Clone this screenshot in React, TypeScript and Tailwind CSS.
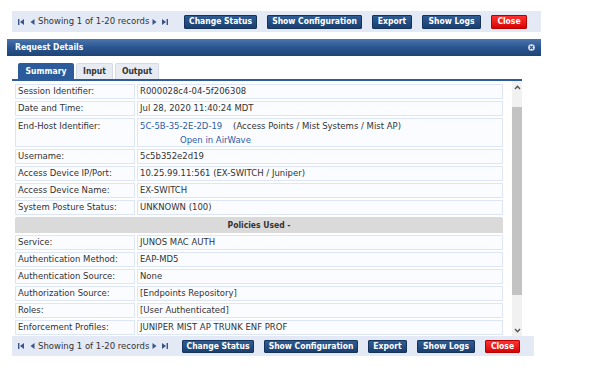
import React from "react";

const COND = "'DejaVu Sans Condensed', 'DejaVu Sans', sans-serif";

function FirstIcon() {
  return (
    <svg width="7" height="6" viewBox="0 0 7 6" className="block">
      <rect x="0" y="0" width="1.4" height="6" fill="#3a5588" />
      <polygon points="6,0 6,6 2,3" fill="#3a5588" />
    </svg>
  );
}
function PrevIcon() {
  return (
    <svg width="5" height="6" viewBox="0 0 5 6" className="block">
      <polygon points="4.5,0 4.5,6 0.5,3" fill="#3a5588" />
    </svg>
  );
}
function NextIcon() {
  return (
    <svg width="5" height="6" viewBox="0 0 5 6" className="block">
      <polygon points="0.5,0 0.5,6 4.5,3" fill="#3a5588" />
    </svg>
  );
}
function LastIcon() {
  return (
    <svg width="7" height="6" viewBox="0 0 7 6" className="block">
      <polygon points="1,0 1,6 5,3" fill="#3a5588" />
      <rect x="5.6" y="0" width="1.4" height="6" fill="#3a5588" />
    </svg>
  );
}

function Btn({ label, w, red, h }: { label: string; w: number; red?: boolean; h: number }) {
  return (
    <div
      className={
        "flex items-center justify-center text-white font-bold text-[8.5px] rounded-[1px] border " +
        (red
          ? "bg-gradient-to-b from-[#ff3030] to-[#d60000] border-[#b80000]"
          : "bg-gradient-to-b from-[#2f5c94] to-[#1b3f6f] border-[#15345c]")
      }
      style={{ width: w, height: h, fontFamily: COND }}
    >
      {label}
    </div>
  );
}

function Toolbar({
  width,
  height,
  pagW,
  btnH,
  widths,
}: {
  width: number;
  height: number;
  pagW: number;
  btnH: number;
  widths: number[];
}) {
  const labels = ["Change Status", "Show Configuration", "Export", "Show Logs", "Close"];
  return (
    <div className="flex items-center bg-[#e4eaf5]" style={{ width, height }}>
      <div className="flex items-center pl-[6px] text-[8.5px] text-[#333]" style={{ width: pagW }}>
        <FirstIcon />
        <div className="w-[5px]" />
        <PrevIcon />
        <span className="ml-[3px] mr-[3px] leading-none">Showing 1 of 1-20 records</span>
        <NextIcon />
        <div className="w-[4px]" />
        <LastIcon />
      </div>
      <div className="flex items-center gap-[10px]">
        {labels.map((l, i) => (
          <Btn key={l} label={l} w={widths[i]} h={btnH} red={i === 4} />
        ))}
      </div>
    </div>
  );
}

function Cell({ children, className = "" }: { children: React.ReactNode; className?: string }) {
  return (
    <div
      className={
        "bg-[#fbfcff] border border-[#dce6f7] pl-[2px] text-[8.5px] text-[#333] leading-[13px] " + className
      }
    >
      {children}
    </div>
  );
}

export default function App() {
  const top: [string, React.ReactNode][] = [
    ["Session Identifier:", "R000028c4-04-5f206308"],
    ["Date and Time:", "Jul 28, 2020 11:40:24 MDT"],
  ];
  const mid: [string, string][] = [
    ["Username:", "5c5b352e2d19"],
    ["Access Device IP/Port:", "10.25.99.11:561 (EX-SWITCH / Juniper)"],
    ["Access Device Name:", "EX-SWITCH"],
    ["System Posture Status:", "UNKNOWN (100)"],
  ];
  const pol: [string, string][] = [
    ["Service:", "JUNOS MAC AUTH"],
    ["Authentication Method:", "EAP-MD5"],
    ["Authentication Source:", "None"],
    ["Authorization Source:", "[Endpoints Repository]"],
    ["Roles:", "[User Authenticated]"],
    ["Enforcement Profiles:", "JUNIPER MIST AP TRUNK ENF PROF"],
  ];
  const row = (l: string, v: React.ReactNode) => (
    <React.Fragment key={l}>
      <Cell className="h-[15px] flex items-center">{l}</Cell>
      <Cell className="h-[15px] flex items-center">{v}</Cell>
    </React.Fragment>
  );

  return (
    <div
      className="w-[597px] h-[372px] bg-white pt-[11px] overflow-hidden"
      style={{ fontFamily: "'DejaVu Sans', Verdana, sans-serif" }}
    >
      <div className="ml-[12px]">
        <Toolbar width={529} height={21} pagW={172} btnH={14} widths={[73, 95, 40, 59, 36]} />
      </div>

      <div className="ml-[7px] mt-[7px] w-[534px] h-[17px] flex items-center justify-between bg-gradient-to-b from-[#4a75ad] via-[#2a5590] to-[#1d4476] px-[8px] pr-[6px]">
        <span className="text-white font-bold text-[8.5px] leading-none" style={{ fontFamily: COND }}>
          Request Details
        </span>
        <svg width="7" height="7" viewBox="0 0 7 7" className="block">
          <circle cx="3.5" cy="3.5" r="3.3" fill="#e6e9ee" />
          <path d="M2 2 L5 5 M5 2 L2 5" stroke="#33507a" strokeWidth="1.1" />
        </svg>
      </div>

      <div className="ml-[12px] w-[510px]">
        <div className="flex gap-[2px] pl-[6px] mt-[7px] h-[16px] items-end">
          <div
            className="w-[56px] h-[16px] flex items-center justify-center bg-[#2b5b9b] text-white font-bold text-[8.5px] rounded-t-[2px]"
            style={{ fontFamily: COND }}
          >
            Summary
          </div>
          <div
            className="w-[37px] h-[16px] flex items-center justify-center bg-[#e8ecf2] border border-b-0 border-[#d4dbe6] text-[#333] font-bold text-[8.5px] rounded-t-[2px]"
            style={{ fontFamily: COND }}
          >
            Input
          </div>
          <div
            className="w-[44px] h-[16px] flex items-center justify-center bg-[#e8ecf2] border border-b-0 border-[#d4dbe6] text-[#333] font-bold text-[8.5px] rounded-t-[2px]"
            style={{ fontFamily: COND }}
          >
            Output
          </div>
        </div>
        <div className="h-[2px] bg-[#2d5c9c]" />

        <div className="flex h-[255px]">
          <div className="w-[491px] overflow-hidden pl-[3px] pt-[3px]">
            <div className="grid grid-cols-[120px_366px] gap-[2px] w-[488px]">
              {top.map(([l, v]) => row(l, v))}
              <Cell className="h-[29px]">
                <div className="leading-[14px]">End-Host Identifier:</div>
              </Cell>
              <Cell className="h-[29px]">
                <div className="leading-[14px] whitespace-pre">
                  <span className="text-[#2b5ca8]">5C-5B-35-2E-2D-19</span>
                  {"    (Access Points / Mist Systems / Mist AP)"}
                </div>
                <div className="leading-[14px] pl-[40px] text-[#2b5ca8]">Open in AirWave</div>
              </Cell>
              {mid.map(([l, v]) => row(l, v))}
              <div
                className="col-span-2 h-[16px] bg-[#dadada] flex items-center justify-center text-[#333] font-bold text-[8.5px] rounded-t-[2px]"
                style={{ fontFamily: COND }}
              >
                Policies Used -
              </div>
              {pol.map(([l, v]) => row(l, v))}
            </div>
          </div>
          <div className="ml-[9px] w-[10px] bg-[#f1f1f1] flex flex-col items-center">
            <svg width="7" height="5" viewBox="0 0 7 5" className="block mt-[4px]">
              <path d="M1 4 L3.5 1.3 L6 4" stroke="#505050" strokeWidth="1.3" fill="none" />
            </svg>
            <div className="mt-[17px] w-[10px] h-[188px] bg-[#c3c3c3]" />
            <div className="flex-1" />
            <svg width="7" height="5" viewBox="0 0 7 5" className="block mb-[3px]">
              <path d="M1 1 L3.5 3.7 L6 1" stroke="#505050" strokeWidth="1.3" fill="none" />
            </svg>
          </div>
        </div>

        <Toolbar width={522} height={20} pagW={170} btnH={13} widths={[72, 94, 39, 58, 35]} />
      </div>
    </div>
  );
}
